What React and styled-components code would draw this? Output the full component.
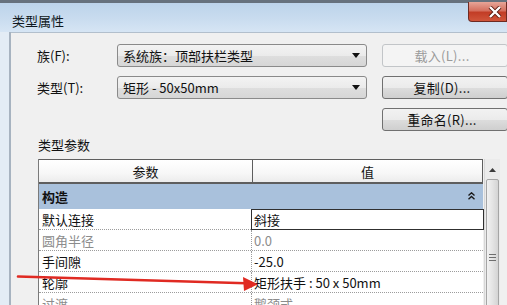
import React from "react";
import styled, { createGlobalStyle } from "styled-components";

const GlobalStyle = createGlobalStyle`
  html, body {
    margin: 0;
    padding: 0;
  }
  body {
    width: 507px;
    height: 305px;
    overflow: hidden;
    background: #f0f0f0;
    font-family: "Noto Sans CJK SC", "Liberation Sans", sans-serif;
  }
`;

const rows = [
  { name: "默认连接", value: "斜接", selected: true },
  { name: "圆角半径", value: "0.0", muted: true },
  { name: "手间隙", value: "-25.0" },
  { name: "轮廓", value: "矩形扶手 : 50 x 50mm" },
  { name: "过渡", value: "鹅颈式", muted: true },
];

const App = () => {
  return (
    <Window>
      <GlobalStyle />
      <TopEdge />
      <TitleBar>
        <Title>类型属性</Title>
        <CloseButton>
          <svg width="14" height="12" viewBox="0 0 14 12">
            <path d="M2 1 L12 11 M12 1 L2 11" stroke="#5a1a10" strokeWidth="4" />
            <path d="M2 1 L12 11 M12 1 L2 11" stroke="#ffffff" strokeWidth="2.4" />
          </svg>
        </CloseButton>
      </TitleBar>
      <Body>
        <Frame />
        <Content>
          <FormGrid>
            <Label>族(F):</Label>
            <Combo>
              系统族：顶部扶栏类型
              <Caret />
            </Combo>
            <Button disabled>载入(L)...</Button>

            <Label>类型(T):</Label>
            <Combo>
              矩形 - 50x50mm
              <Caret />
            </Combo>
            <Button>复制(D)...</Button>

            <Button $col={3}>重命名(R)...</Button>
          </FormGrid>

          <SectionLabel>类型参数</SectionLabel>

          <TableWrap>
            <Table>
              <HeaderRow>
                <HeaderCell>参数</HeaderCell>
                <HeaderCell>值</HeaderCell>
              </HeaderRow>
              <GroupRow>
                <span>构造</span>
                <Chevrons>
                  <svg width="7" height="8" viewBox="0 0 7 8">
                    <path d="M0.5 3.5 L3.5 0.8 L6.5 3.5 M0.5 7.2 L3.5 4.5 L6.5 7.2" fill="none" stroke="#1a1a1a" strokeWidth="1.4" />
                  </svg>
                </Chevrons>
              </GroupRow>
              {rows.map((r) => (
                <Row key={r.name}>
                  <NameCell $muted={r.muted}>{r.name}</NameCell>
                  <ValueCell $muted={r.muted} $selected={r.selected}>
                    {r.value}
                  </ValueCell>
                </Row>
              ))}
            </Table>
            <ScrollBar>
              <ScrollUp>
                <svg width="7" height="4" viewBox="0 0 7 4">
                  <path d="M0 4 L3.5 0 L7 4 Z" fill="#3c3c3c" />
                </svg>
              </ScrollUp>
              <Thumb>
                <Grip />
              </Thumb>
            </ScrollBar>
          </TableWrap>
        </Content>
      </Body>
      <Arrow width="507" height="305" viewBox="0 0 507 305">
        <path d="M18 276.5 L246 283.2" stroke="#e02a22" strokeWidth="2.6" strokeLinecap="round" />
        <path d="M258 284.2 L243 277 L244 291 Z" fill="#e02a22" />
      </Arrow>
    </Window>
  );
};

export default App;

const Window = styled.div`
  position: relative;
  width: 507px;
  height: 305px;
  overflow: hidden;
  display: flex;
  flex-direction: column;
`;

const TopEdge = styled.div`
  height: 3px;
  flex-shrink: 0;
  background: #66717d;
`;

const TitleBar = styled.div`
  height: 29px;
  flex-shrink: 0;
  display: flex;
  justify-content: space-between;
  align-items: flex-start;
  padding-left: 12px;
  background: linear-gradient(180deg, #bcd3ea 0%, #c9dcef 55%, #d6e5f4 100%);
`;

const Title = styled.div`
  font-size: 13px;
  line-height: 16px;
  margin-top: 10px;
  color: #101820;
`;

const CloseButton = styled.div`
  width: 39px;
  height: 20px;
  margin-top: -1px;
  box-sizing: border-box;
  border: 1px solid #6e2a22;
  border-top: none;
  border-radius: 0 0 0 4px;
  background: linear-gradient(180deg, #e7a598 0%, #d5705f 45%, #c23d26 55%, #d0553b 100%);
  display: flex;
  align-items: center;
  justify-content: flex-end;
  padding-right: 4px;
`;

const Body = styled.div`
  flex: 1;
  min-height: 0;
  display: flex;
  overflow: hidden;
`;

const Frame = styled.div`
  width: 9px;
  flex-shrink: 0;
  background: #e3ecf5;
  border-right: 2px solid #a7b3c0;
`;

const Content = styled.div`
  flex: 1;
  display: flex;
  flex-direction: column;
  background: #f0f0f0;
  border-top: 1px solid #b2bfcc;
  padding: 11px 0 0 26px;
  overflow: hidden;
`;

const FormGrid = styled.div`
  flex-shrink: 0;
  display: grid;
  grid-template-columns: 65px 250px 126px;
  grid-auto-rows: 23px;
  column-gap: 15px;
  row-gap: 9px;
  align-items: center;
`;

const Label = styled.div`
  font-size: 13px;
  line-height: 16px;
  color: #111;
  white-space: nowrap;
`;

const Combo = styled.div`
  height: 23px;
  box-sizing: border-box;
  display: flex;
  align-items: center;
  justify-content: space-between;
  padding: 0 6px 0 5px;
  border: 1px solid #8a8a8a;
  border-radius: 3px;
  background: linear-gradient(180deg, #f3f3f3 0%, #ebebeb 50%, #dedede 51%, #d6d6d6 100%);
  font-size: 13px;
  color: #111;
`;

const Caret = styled.span`
  width: 0;
  height: 0;
  border-left: 4px solid transparent;
  border-right: 4px solid transparent;
  border-top: 5px solid #111;
`;

const Button = styled.div`
  grid-column: ${(p) => p.$col || "auto"};
  height: 23px;
  box-sizing: border-box;
  display: flex;
  align-items: center;
  justify-content: center;
  padding-right: 6px;
  border: 1px solid ${(p) => (p.disabled ? "#c2c5c8" : "#707070")};
  border-radius: 3px;
  background: ${(p) =>
    p.disabled
      ? "#f4f4f4"
      : "linear-gradient(180deg, #f2f2f2 0%, #ebebeb 50%, #dddddd 51%, #cfcfcf 100%)"};
  color: ${(p) => (p.disabled ? "#9a9a9a" : "#111")};
  font-size: 13px;
  letter-spacing: 0.3px;
`;

const SectionLabel = styled.div`
  flex-shrink: 0;
  margin: 6px 0 0 1px;
  font-size: 13px;
  line-height: 16px;
  color: #111;
`;

const TableWrap = styled.div`
  display: flex;
  margin: 6px 7px 0 1px;
  flex: 1;
  min-height: 0;
`;

const Table = styled.div`
  width: 447px;
  display: flex;
  flex-direction: column;
  background: #ffffff;
  border-left: 1px solid #7a7a7a;
`;

const HeaderRow = styled.div`
  height: 25px;
  flex-shrink: 0;
  box-sizing: border-box;
  display: grid;
  grid-template-columns: 213px 1fr;
  border: 1px solid #5e5e5e;
  border-left: none;
  border-bottom-width: 2px;
  background: linear-gradient(180deg, #ffffff 0%, #f7f7f7 60%, #ececec 100%);
`;

const HeaderCell = styled.div`
  display: flex;
  align-items: center;
  justify-content: center;
  font-size: 13px;
  color: #111;
  & + & {
    border-left: 1px solid #5e5e5e;
  }
`;

const GroupRow = styled.div`
  height: 25px;
  flex-shrink: 0;
  box-sizing: border-box;
  display: flex;
  align-items: center;
  justify-content: space-between;
  padding: 0 8px 0 3px;
  background: #a9c1dc;
  font-size: 13px;
  font-weight: 700;
  color: #111;
`;

const Chevrons = styled.span`
  display: flex;
  margin-top: -2px;
`;

const Row = styled.div`
  height: 21px;
  flex-shrink: 0;
  box-sizing: border-box;
  display: grid;
  grid-template-columns: 213px 1fr;
  border-bottom: 1px dotted #9c9c9c;
`;

const NameCell = styled.div`
  display: flex;
  align-items: center;
  padding-left: 3px;
  border-right: 1px dotted #9c9c9c;
  font-size: 13px;
  color: ${(p) => (p.$muted ? "#8c8c8c" : "#111")};
`;

const ValueCell = styled.div`
  display: flex;
  align-items: center;
  box-sizing: border-box;
  padding-left: 2px;
  margin: ${(p) => (p.$selected ? "0 -1px -1px -1px" : "0")};
  border: ${(p) => (p.$selected ? "1px solid #303030" : "none")};
  font-size: 13px;
  color: ${(p) => (p.$muted ? "#8c8c8c" : "#111")};
`;

const ScrollBar = styled.div`
  width: 15px;
  margin-left: 1px;
  display: flex;
  flex-direction: column;
  background: #ebebeb;
  border-left: 1px solid #d8d8d8;
`;

const ScrollUp = styled.div`
  height: 17px;
  flex-shrink: 0;
  display: flex;
  align-items: center;
  justify-content: center;
  margin-top: 2px;
`;

const Thumb = styled.div`
  height: 156px;
  flex-shrink: 0;
  margin: 1px 1px 0;
  box-sizing: border-box;
  border: 1px solid #a5a5a5;
  border-radius: 2px;
  background: linear-gradient(90deg, #f2f2f2 0%, #e4e4e4 50%, #d4d4d4 100%);
  display: flex;
  align-items: center;
  justify-content: center;
`;

const Grip = styled.div`
  width: 7px;
  height: 7px;
  background: linear-gradient(
    180deg,
    #6e6e6e 0,
    #6e6e6e 1px,
    transparent 1px,
    transparent 3px,
    #6e6e6e 3px,
    #6e6e6e 4px,
    transparent 4px,
    transparent 6px,
    #6e6e6e 6px,
    #6e6e6e 7px
  );
`;

const Arrow = styled.svg`
  position: absolute;
  left: 0;
  top: 0;
  pointer-events: none;
`;
